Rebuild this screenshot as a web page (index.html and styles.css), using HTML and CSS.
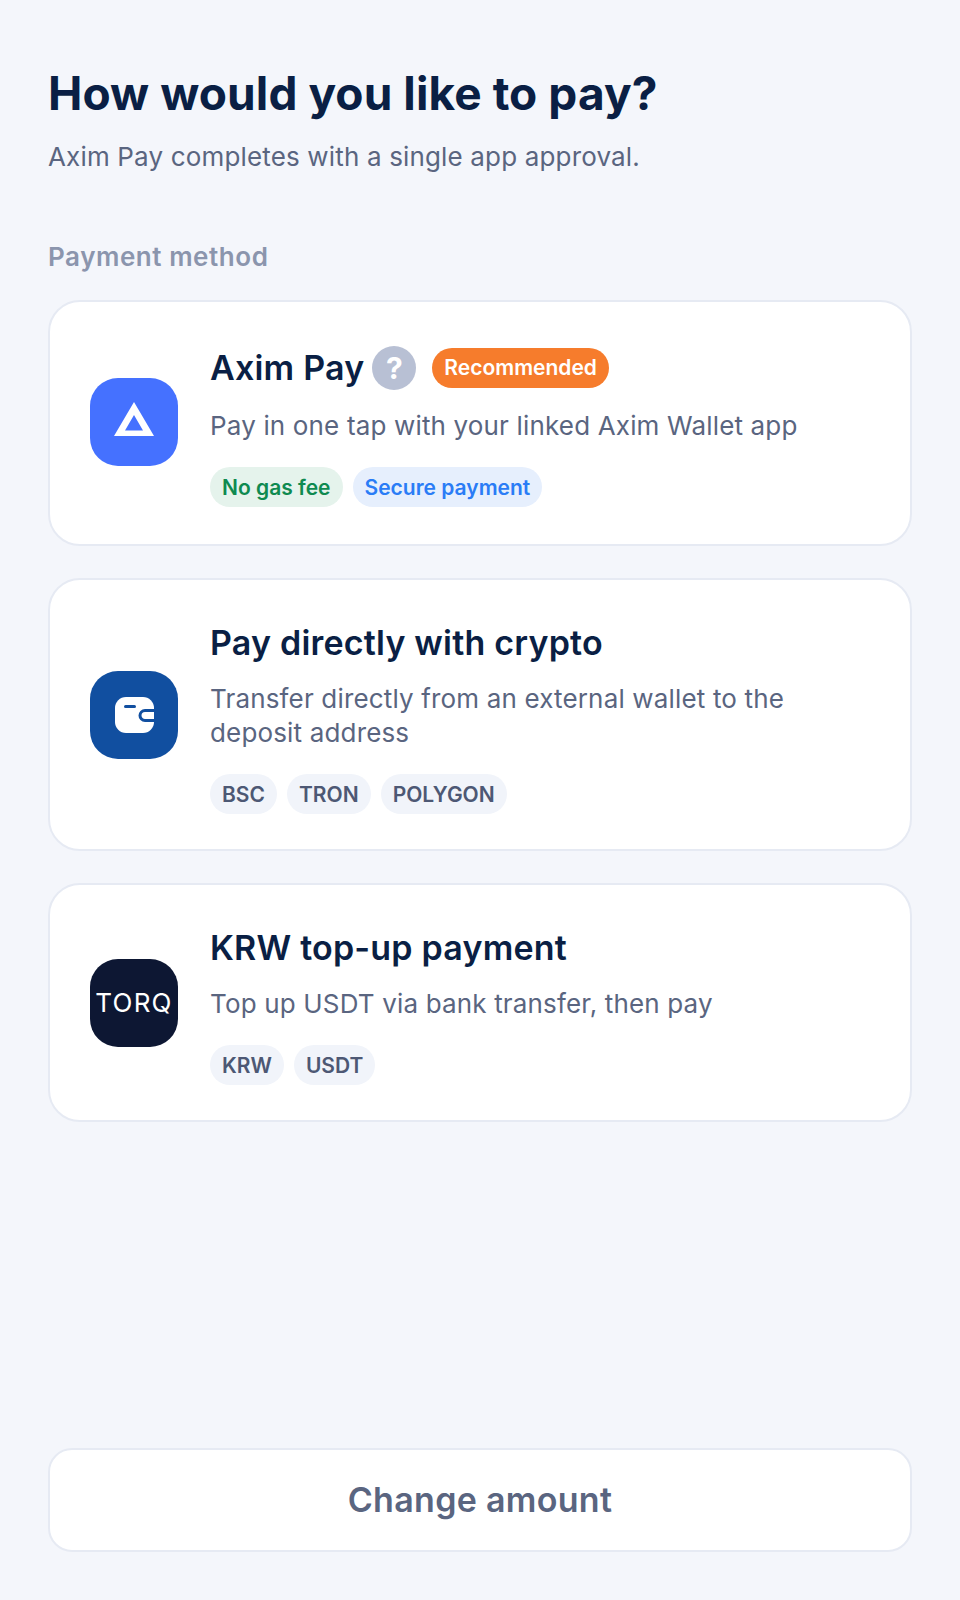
FILE: index.html
```html
<!DOCTYPE html>
<html lang="en">
<head>
  <meta charset="UTF-8" />
  <meta name="viewport" content="width=device-width, initial-scale=1" />
  <title>Choose payment method</title>
  <link rel="stylesheet" href="styles.css">
</head>
<body>
  <main class="page">
    <header class="head">
      <h1>How would you like to pay?</h1>
      <p>Axim Pay completes with a single app approval.</p>
    </header>

    <h2 class="section-label">Payment method</h2>

    <section class="methods">
      <article class="card card-featured">
        <div class="logo logo-axim">
          <svg class="axim-mark" width="40" height="34" viewBox="0 0 40 34"><path d="M20 0 L40 34 H0 Z M20 13 L11 28.500 H29 Z" fill="#fff" fill-rule="evenodd"/></svg>
        </div>
        <div class="card-body">
          <div class="title-row">
            <h3>Axim Pay</h3>
            <span class="help">?</span>
            <span class="badge">Recommended</span>
          </div>
          <p class="desc">Pay in one tap with your linked Axim Wallet app</p>
          <div class="chips">
            <span class="chip chip-green">No gas fee</span>
            <span class="chip chip-blue">Secure payment</span>
          </div>
        </div>
      </article>

      <article class="card">
        <div class="logo logo-wallet">
          <svg width="39" height="36" viewBox="0 0 39 36">
            <rect width="39" height="36" rx="11" fill="#fff"/>
            <rect x="9" y="8" width="12" height="3" rx="1.500" fill="#114fa0"/>
            <path d="M39 13.500 H30 a5 5 0 0 0 0 10 H39" fill="none" stroke="#114fa0" stroke-width="3"/>
          </svg>
        </div>
        <div class="card-body">
          <h3>Pay directly with crypto</h3>
          <p class="desc">Transfer directly from an external wallet to the deposit address</p>
          <div class="chips">
            <span class="chip">BSC</span>
            <span class="chip">TRON</span>
            <span class="chip">POLYGON</span>
          </div>
        </div>
      </article>

      <article class="card">
        <div class="logo logo-torq">TORQ</div>
        <div class="card-body">
          <h3>KRW top-up payment</h3>
          <p class="desc">Top up USDT via bank transfer, then pay</p>
          <div class="chips">
            <span class="chip">KRW</span>
            <span class="chip">USDT</span>
          </div>
        </div>
      </article>
    </section>

    <button class="change-btn" type="button">Change amount</button>
  </main>
</body>
</html>
```

FILE: styles.css
```css
* {
  box-sizing: border-box;
}

body {
  margin: 0;
  font-family: Inter, "Noto Sans", sans-serif;
  background: #f4f6fb;
  color: #0a1f44;
}

.page {
  height: 1600px;
  padding: 64px 48px 48px;
  display: flex;
  flex-direction: column;
}

.head h1 {
  margin: 0;
  font-size: 46px;
  line-height: 58px;
  font-weight: 700;
  letter-spacing: 0.08px;
}

.head p {
  margin: 15px 0 0;
  font-size: 26px;
  line-height: 40px;
  letter-spacing: 0.16px;
  color: #5a6580;
}

.section-label {
  margin: 62px 0 0;
  font-size: 26px;
  line-height: 36px;
  font-weight: 600;
  letter-spacing: 0.55px;
  color: #8b95ad;
}

.methods {
  margin-top: 25px;
  display: flex;
  flex-direction: column;
  gap: 32px;
}

.card {
  display: flex;
  align-items: center;
  gap: 32px;
  padding: 35px 40px;
  background: #fff;
  border: 2px solid #e6eaf3;
  border-radius: 32px;
}

.card-featured {
  padding-bottom: 37px;
}

.logo {
  flex: none;
  width: 88px;
  height: 88px;
  border-radius: 28px;
  display: flex;
  align-items: center;
  justify-content: center;
}

.logo-axim {
  background: #4571ff;
}

.axim-mark {
  margin-top: -6px;
}

.logo-wallet {
  background: #114fa0;
}

.logo-torq {
  background: #0d1733;
  color: #fff;
  font-size: 26px;
  letter-spacing: 1.200px;
}

.card-body {
  flex: 1;
  min-width: 0;
}

.title-row {
  height: 61px;
  display: flex;
  align-items: center;
}

.card-body h3 {
  margin: 0;
  font-size: 34px;
  line-height: 56px;
  font-weight: 600;
  letter-spacing: 0.2px;
}

.help {
  margin-left: 8px;
  width: 44px;
  height: 44px;
  border-radius: 50%;
  background: #b8c0d4;
  color: #fff;
  font-size: 30px;
  font-weight: 700;
  display: flex;
  align-items: center;
  justify-content: center;
}

.badge {
  margin-left: 16px;
  height: 40px;
  padding: 0 12px;
  border-radius: 20px;
  background: #f67c2c;
  color: #fff;
  font-size: 21px;
  font-weight: 600;
  display: flex;
  align-items: center;
}

.desc {
  margin: 11px 0 0;
  font-size: 26px;
  line-height: 34px;
  letter-spacing: 0.16px;
  color: #5a6580;
}

.chips {
  margin-top: 24px;
  display: flex;
  gap: 10px;
}

.chip {
  height: 40px;
  padding: 0 12px;
  border-radius: 20px;
  background: #f1f4fa;
  color: #4d5874;
  font-size: 21px;
  font-weight: 600;
  display: flex;
  align-items: center;
}

.chip-green {
  background: #e5f3ec;
  color: #0f8a50;
}

.chip-blue {
  background: #e6effd;
  color: #2a7cf6;
}

.change-btn {
  margin-top: auto;
  height: 104px;
  padding: 0 0 2px;
  background: #fff;
  border: 2px solid #e6eaf3;
  border-radius: 24px;
  font-family: inherit;
  font-size: 34px;
  font-weight: 600;
  letter-spacing: 0.3px;
  color: #5a6580;
}
```
